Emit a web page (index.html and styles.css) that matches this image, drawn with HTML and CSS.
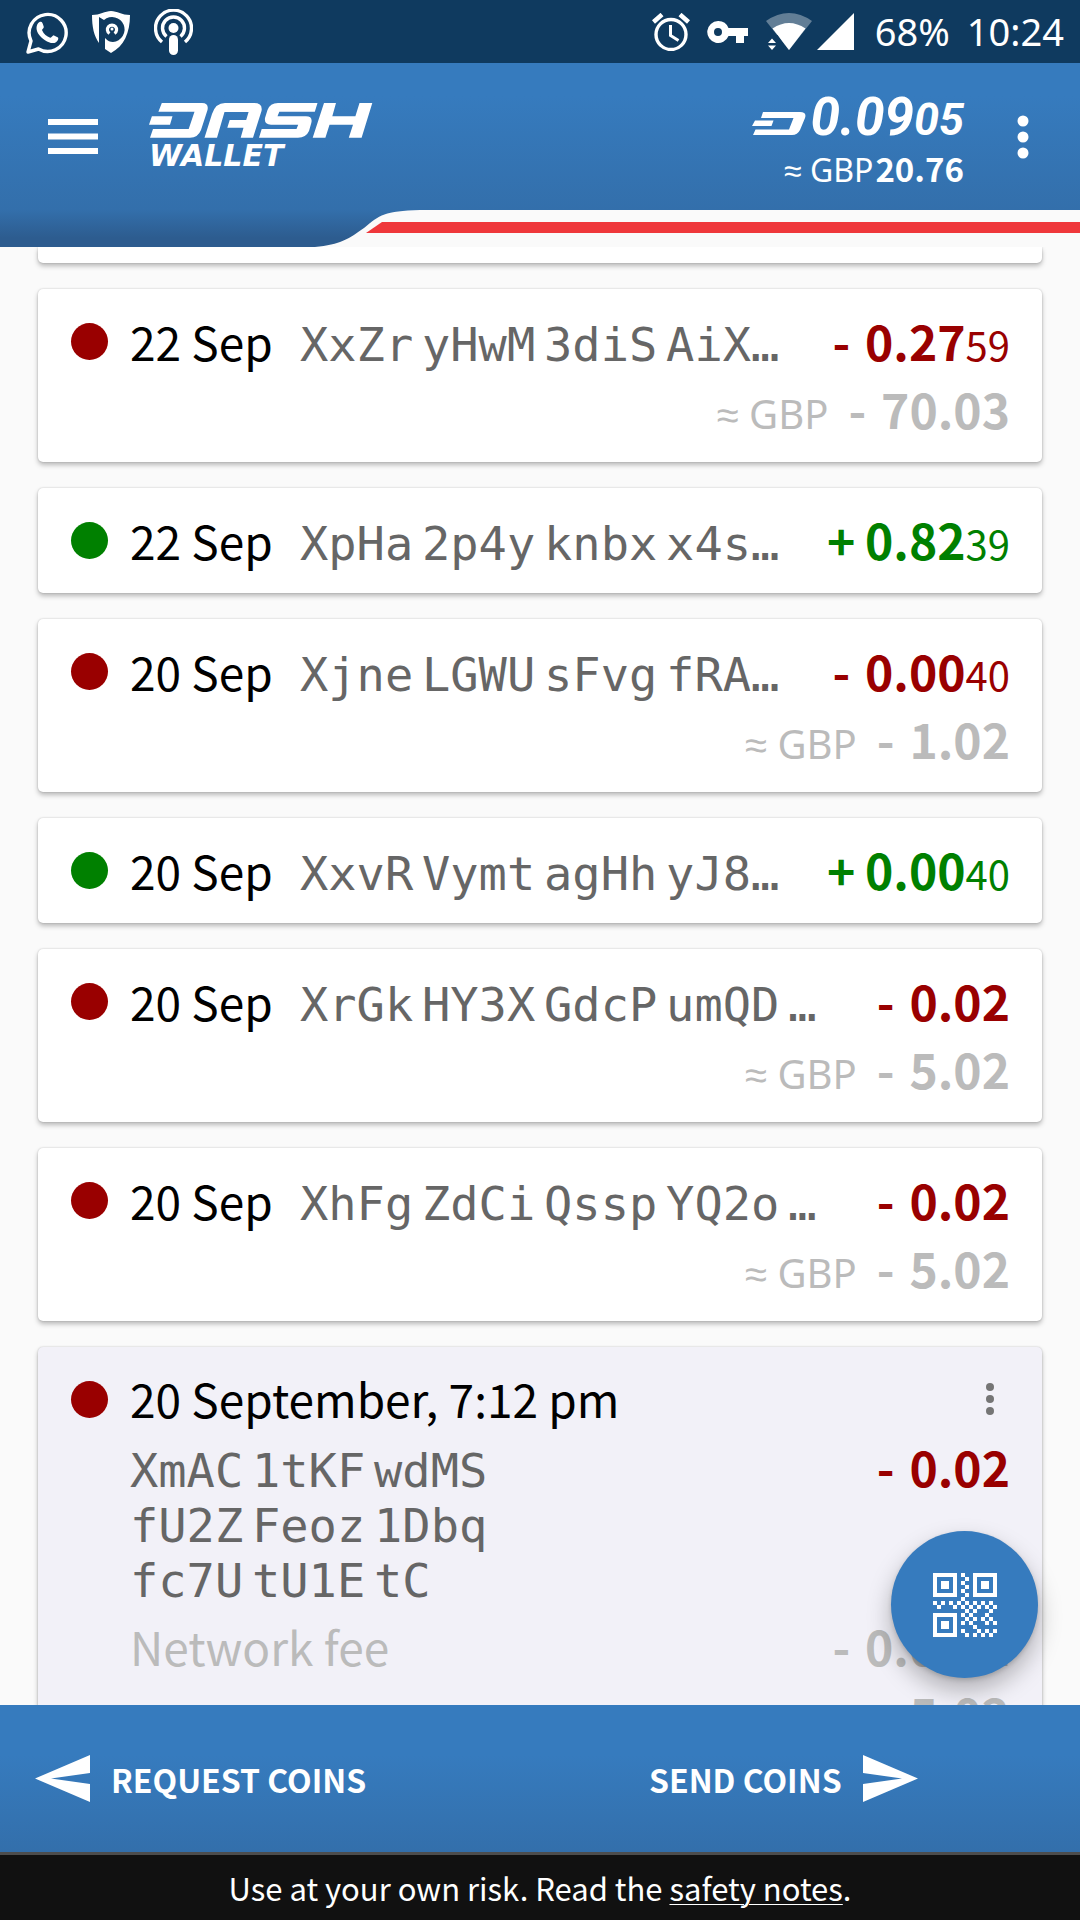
FILE: index.html
```html
<!DOCTYPE html>
<html lang="en">
<head>
<meta charset="utf-8">
<meta name="viewport" content="width=device-width, initial-scale=1">
<title>Dash Wallet</title>
<link rel="stylesheet" href="styles.css">
</head>
<body>
<div class="status">
  <div class="status-left">
    <svg width="42" height="44" viewBox="0 0 42 44" fill="none"><path d="M2 42l3-11A18.500 18.500 0 1 1 12.500 39z" stroke="#fff" stroke-width="3.400" stroke-linejoin="round"/><path d="M13.500 12c2.500-1 3 .5 4.200 4.500.5 2-2 2.500-1.500 4 1.500 3.500 4.500 6 8 7.300 1.500.4 2.200-2.800 3.800-2.400l4 2c.8.600 0 3.500-2 4.800-3 1.800-7 .5-11-2-4.500-3-8.500-7.500-8.500-12.200 0-2.500 1-5 3-6z" fill="#fff"/></svg>
    <svg width="38" height="42" viewBox="0 0 38 42"><path fill="#fff" fill-rule="evenodd" d="M0 4C8 4 13 0 19 0s11 4 19 4c0 18-6 31-19 38l-6-4V27c3 3 5 4 8 4a12.500 12.500 0 1 0-9-22L7 6v26C2 25 0 16 0 4z"/><path fill="none" stroke="#fff" stroke-width="3.200" d="M17.500 22.500a4.600 4.600 0 1 1 5 0"/><circle cx="20" cy="18" r="1.500" fill="#fff"/></svg>
    <svg width="39" height="46" viewBox="0 0 39 46" fill="none" stroke="#fff" stroke-width="3.400"><path d="M8 33a18 18 0 1 1 23 0"/><path d="M12.500 27.500a11 11 0 1 1 14 0"/><circle cx="19.500" cy="19" r="5" fill="#fff" stroke="none"/><rect x="15" y="26" width="9" height="20" rx="4.500" fill="#fff" stroke="none"/></svg>
  </div>
  <div class="status-right">
    <svg class="i-alarm" width="38" height="38" viewBox="0 0 38 38" fill="none" stroke="#fff"><circle cx="19" cy="21.500" r="15" stroke-width="3.400"/><path d="M1.500 9L10 1.500M28 1.500L36.500 9" stroke-width="4.500"/><path d="M18.500 12v10.500l8 5" stroke-width="3"/></svg>
    <svg class="i-key" width="42" height="24" viewBox="0 0 42 24"><path fill="#fff" fill-rule="evenodd" d="M11 1a11 11 0 0 1 10.500 7H41v8h-4v7h-8v-7h-7.500A11 11 0 1 1 11 1zm0 7a4 4 0 1 0 0 8 4 4 0 0 0 0-8z"/></svg>
    <svg class="i-wifi" width="46" height="37" viewBox="0 0 46 37"><path fill="#fff" fill-opacity=".35" d="M0 8Q23-8 46 8L23 37z"/><path fill="#fff" d="M6.500 15.500Q23 4.500 39.500 15.500L23 37z"/><path fill="#0f3a5f" d="M0 22h11.500l6 9V37H0z"/><path fill="#fff" d="M6 25.500l4 4.500H2zM6 37l4-4.500H2z"/></svg>
    <svg class="i-signal" width="37" height="37" viewBox="0 0 37 37"><path fill="#fff" d="M37 0v37H0z"/></svg>
    <span>68%</span><span>10:24</span>
  </div>
</div>

<header class="header">
  <div class="toolbar">
    <button class="icon-btn menu" aria-label="Menu"><svg width="50" height="35" viewBox="0 0 50 35"><path fill="#fff" d="M0 0h50v6H0zM0 14.500h50v6H0zM0 29h50v6H0z"/></svg></button>
    <div class="brand">
      <svg class="logo" width="224" height="35" viewBox="0 0 224 35" role="img" aria-label="Dash"><path fill="#fff" d="M12.800 0H53Q60 0 58.500 7L52 27Q49 34.700 41 34.700H1L4 26H39.700L45.500 8.700H9.400zM2.900 13.300H23.500L21 21.700H0zM55.500 34.700L63 11Q66.500 0 76 0H105Q114 0 112.500 8L104 34.700H91.700L94.500 24.700H78.300L80.700 17H97.200L99.600 9H75.500L68 34.700zM168.500 0H129Q121 0 118.500 7L116 15Q115 21.700 122 21.700H149.200L147.500 26H112.700L110 34.700H149Q157 34.700 160 28L162.300 20Q164 13.300 157 13.300H128.500L130.300 8.700H165.800zM175 0H187L183.300 13.300H206.400L210.500 0H223.300L212.600 34.700H199.800L204 21.700H180.500L176.400 34.700H163.700z"/></svg>
      <span class="brand-sub">WALLET</span>
    </div>
    <div class="balance">
      <div class="balance-main"><svg width="54" height="23" viewBox="0 0 54 23"><path fill="#fff" d="M11 0H48Q55 0 53 6L48 18Q45.500 23 40 23H1L3.500 17.500H37L41.500 6H9zM3 8.500H21.500L19.500 14H0z"/></svg><span>0.09<small>05</small></span></div>
      <div class="balance-fiat"><span>≈ GBP</span><b>20.76</b></div>
    </div>
    <button class="icon-btn more" aria-label="More options"><svg width="12" height="44" viewBox="0 0 12 44" fill="#fff"><circle cx="6" cy="6" r="5.500"/><circle cx="6" cy="22" r="5.500"/><circle cx="6" cy="38" r="5.500"/></svg></button>
  </div>
  <div class="swoosh">
    <svg width="432" height="37" viewBox="0 0 432 37"><path fill="#fafafa" d="M315 37C340 35 350 28 364 18C380 5 384 1 420 0H432V37z"/><path fill="#ef373b" d="M366 23L382 12H432V23z"/></svg>
    <div class="swoosh-line"></div>
  </div>
</header>

<main class="main">
  <div class="list">
    <div class="card peek"></div>

    <article class="card">
      <div class="row"><i class="dot out"></i><span class="date">22 Sep</span><span class="addr">XxZr<s> </s>yHwM<s> </s>3diS<s> </s>AiX…</span><span class="amount out"><span class="minus">- </span>0.27<small>59</small></span></div>
      <div class="fiat"><small>≈ GBP</small><span class="amount"><span class="minus">- </span>70.03</span></div>
    </article>
    <article class="card">
      <div class="row"><i class="dot in"></i><span class="date">22 Sep</span><span class="addr">XpHa<s> </s>2p4y<s> </s>knbx<s> </s>x4s…</span><span class="amount in">+&thinsp;0.82<small>39</small></span></div>
    </article>
    <article class="card">
      <div class="row"><i class="dot out"></i><span class="date">20 Sep</span><span class="addr">Xjne<s> </s>LGWU<s> </s>sFvg<s> </s>fRA…</span><span class="amount out"><span class="minus">- </span>0.00<small>40</small></span></div>
      <div class="fiat"><small>≈ GBP</small><span class="amount"><span class="minus">- </span>1.02</span></div>
    </article>
    <article class="card">
      <div class="row"><i class="dot in"></i><span class="date">20 Sep</span><span class="addr">XxvR<s> </s>Vymt<s> </s>agHh<s> </s>yJ8…</span><span class="amount in">+&thinsp;0.00<small>40</small></span></div>
    </article>
    <article class="card">
      <div class="row"><i class="dot out"></i><span class="date">20 Sep</span><span class="addr">XrGk<s> </s>HY3X<s> </s>GdcP<s> </s>umQD<s> </s>…</span><span class="amount out"><span class="minus">- </span>0.02</span></div>
      <div class="fiat"><small>≈ GBP</small><span class="amount"><span class="minus">- </span>5.02</span></div>
    </article>
    <article class="card">
      <div class="row"><i class="dot out"></i><span class="date">20 Sep</span><span class="addr">XhFg<s> </s>ZdCi<s> </s>Qssp<s> </s>YQ2o<s> </s>…</span><span class="amount out"><span class="minus">- </span>0.02</span></div>
      <div class="fiat"><small>≈ GBP</small><span class="amount"><span class="minus">- </span>5.02</span></div>
    </article>
    <article class="card selected">
      <div class="row"><i class="dot out"></i><span class="date full">20 September, 7:12 pm</span><button class="icon-btn card-more" aria-label="Transaction options"><svg width="8" height="32" viewBox="0 0 8 32" fill="#757575"><circle cx="4" cy="4" r="4"/><circle cx="4" cy="16" r="4"/><circle cx="4" cy="28" r="4"/></svg></button></div>
      <div class="detail"><span class="addr multi">XmAC<s> </s>1tKF<s> </s>wdMS<br>fU2Z<s> </s>Feoz<s> </s>1Dbq<br>fc7U<s> </s>tU1E<s> </s>tC</span><span class="amount out"><span class="minus">- </span>0.02</span></div>
      <div class="detail fee"><span>Network fee</span><span class="amount"><span class="minus">- </span>0.00<small>01</small></span></div>
      <div class="fiat"><small>≈ GBP</small><span class="amount"><span class="minus">- </span>5.02</span></div>
    </article>
  </div>
  <button class="fab" aria-label="Scan QR code"><svg width="64" height="64" viewBox="0 0 16 16" shape-rendering="crispEdges"><path fill="#fff" fill-rule="evenodd" d="M0 0h6v6H0zM1 1v4h4V1zM2 2h2v2H2zM10 0h6v6h-6zM11 1v4h4V1zM12 2h2v2h-2zM0 10h6v6H0zM1 11v4h4v-4zM2 12h2v2H2zM7 0h1v1H7zM8 1h1v1H8zM7 2h1v1H7zM8 3h1v1H8zM7 4h1v1H7zM8 5h1v1H8zM7 6h1v1H7zM0 7h1v1H0zM2 7h1v1H2zM4 7h1v1H4zM6 7h1v1H6zM8 7h1v1H8zM10 7h1v1h-1zM12 7h1v1h-1zM14 7h1v1h-1zM1 8h1v1H1zM5 8h1v1H5zM7 8h1v1H7zM9 8h1v1H9zM11 8h1v1h-1zM13 8h1v1h-1zM15 8h1v1h-1zM8 9h1v1H8zM10 9h1v1h-1zM14 9h1v1h-1zM7 10h1v1H7zM9 10h1v1H9zM13 10h1v1h-1zM8 11h1v1H8zM10 11h1v1h-1zM12 11h1v1h-1zM14 11h1v1h-1zM7 12h1v1H7zM9 12h1v1H9zM13 12h1v1h-1zM15 12h1v1h-1zM10 13h1v1h-1zM7 14h1v1H7zM11 14h1v1h-1zM13 14h1v1h-1zM15 14h1v1h-1zM8 15h1v1H8zM10 15h1v1h-1zM12 15h1v1h-1zM14 15h1v1h-1z"/></svg></button>
</main>

<nav class="actions">
  <button class="action request"><svg width="55" height="47" viewBox="0 0 55 47"><path fill="#fff" d="M0 23.500L55 0V18L16 23.500L55 29V47z"/></svg>REQUEST COINS</button>
  <button class="action send">SEND COINS<svg width="55" height="47" viewBox="0 0 55 47"><path fill="#fff" d="M55 23.500L0 0V18L39 23.500L0 29V47z"/></svg></button>
</nav>
<footer class="footer">Use at your own risk. Read the&nbsp;<a href="#safety">safety notes</a>.</footer>
</body>
</html>
```
FILE: styles.css
```css
* { box-sizing: border-box; }

body {
  margin: 0;
  height: 100vh;
  display: flex;
  flex-direction: column;
  background: #fafafa;
  color: #000;
  font-family: "Noto Sans CJK SC", "Noto Sans", sans-serif;
  font-size: 46px;
  line-height: 68px;
  overflow: hidden;
}

svg { display: block; flex: none; }

button {
  margin: 0;
  padding: 0;
  border: 0;
  background: none;
  color: inherit;
  font: inherit;
  cursor: pointer;
}

/* Status bar */
.status {
  flex: none;
  height: 63px;
  padding: 0 16px 0 26px;
  display: flex;
  justify-content: space-between;
  background: #0f3a5f;
  color: #fff;
  font-family: "Noto Sans", sans-serif;
  font-size: 38px;
  line-height: 65px;
}
.status-left, .status-right { display: flex; align-items: center; }
.status-left { gap: 24px; }
.status-right { gap: 17px; }
.i-wifi { margin-right: -12px; }
.i-signal { margin-right: 4px; }

/* Header */
.header {
  flex: none;
  background: linear-gradient(#367bbe 0, #367bbe 33px, #336fab 147px, #2d5c8f 175px, #2d5c8f 184px);
  color: #fff;
}
.toolbar {
  height: 147px;
  padding: 0 51px 0 48px;
  display: flex;
  align-items: center;
}
.brand { margin-left: 51px; display: flex; flex-direction: column; }
.brand-sub {
  font: italic bold 30px/28px "DejaVu Sans", sans-serif;
  margin-top: 4px;
}
.balance {
  margin-left: auto;
  padding-top: 9px;
  display: flex;
  flex-direction: column;
  align-items: flex-end;
}
.balance-main {
  display: flex;
  align-items: baseline;
  gap: 4px;
  font: italic bold 53px/56px Roboto, sans-serif;
}
.balance-main small { font-size: 45px; }
.balance-fiat {
  display: flex;
  align-items: baseline;
  gap: 2px;
  font-size: 33px;
  line-height: 47px;
}
.balance-fiat span { font-family: "Noto Sans", sans-serif; font-size: 32px; }
.more { margin-left: 53px; }

.swoosh { display: flex; height: 37px; }
.swoosh-line {
  flex: 1;
  background: linear-gradient(#fafafa 12px, #ef373b 12px, #ef373b 23px, #fafafa 23px);
}

/* Transactions */
.main { position: relative; flex: 1; min-height: 0; }
.list {
  height: 100%;
  padding: 0 38px;
  display: flex;
  flex-direction: column;
  gap: 26px;
  overflow: hidden;
}
.card {
  flex: none;
  padding: 17px 32px 20px 33px;
  border-radius: 5px;
  background: #fff;
  box-shadow: 0 0 2px rgba(0, 0, 0, .2), 0 3px 5px rgba(0, 0, 0, .26);
}
.card.peek { height: 16px; padding: 0; border-radius: 0 0 5px 5px; }
.card.selected { background: #f2f1f8; }

.row, .fiat, .detail { display: flex; align-items: baseline; }
.row, .fiat { height: 68px; }
small, s { line-height: 0; }

.dot { align-self: center; width: 37px; height: 37px; margin-top: 2px; border-radius: 50%; }
.dot.out { background: #900; }
.dot.in { background: #008000; }
.date { width: 170px; margin-left: 22px; white-space: nowrap; }
.date.full { width: auto; }

.addr {
  color: #666;
  font-family: "DejaVu Sans Mono", monospace;
  font-size: 47px;
  white-space: nowrap;
}
.addr s {
  font-family: "Noto Sans", sans-serif;
  font-size: 34px;
  text-decoration: none;
}
.addr.multi { padding: 6px 0 3px; line-height: 55px; }

.amount {
  margin-left: auto;
  font-size: 48px;
  font-weight: 700;
  white-space: nowrap;
}
.amount.out { color: #900; }
.amount.in { color: #008000; }
.amount small { font-size: 40px; font-weight: 400; }
.minus { margin-right: 4px; }

.fiat {
  justify-content: flex-end;
  gap: 20px;
  color: #bbb;
}
.fiat small { font-family: "Noto Sans", sans-serif; font-size: 40px; }
.fiat .amount { margin-left: 0; }
.detail { padding-left: 59px; }
.detail.fee { height: 68px; color: #bbb; }
.card-more { align-self: center; margin: 2px 16px 0 auto; }

.fab {
  position: absolute;
  right: 42px;
  bottom: 27px;
  width: 147px;
  height: 147px;
  display: grid;
  place-items: center;
  border-radius: 50%;
  background: #367bbe;
  box-shadow: 0 2px 4px rgba(0, 0, 0, .15), 0 12px 24px rgba(0, 0, 0, .28);
}

/* Bottom actions */
.actions {
  position: relative;
  flex: none;
  height: 150px;
  display: grid;
  grid-template-columns: 1fr 1fr;
  border-bottom: 3px solid #4d4d4d;
  background: linear-gradient(#367bbe 0, #367bbe 50px, #336fab 147px);
  color: #fff;
  font-size: 32px;
  font-weight: 700;
}
.action { display: flex; align-items: center; gap: 21px; }
.request { padding-left: 35px; }
.send { padding-left: 109px; }

.footer {
  flex: none;
  height: 65px;
  display: flex;
  justify-content: center;
  background: #111;
  color: #fff;
  font-size: 31px;
  line-height: 65px;
}
.footer a { color: inherit; text-underline-offset: 3px; text-decoration-thickness: 1px; }
```
